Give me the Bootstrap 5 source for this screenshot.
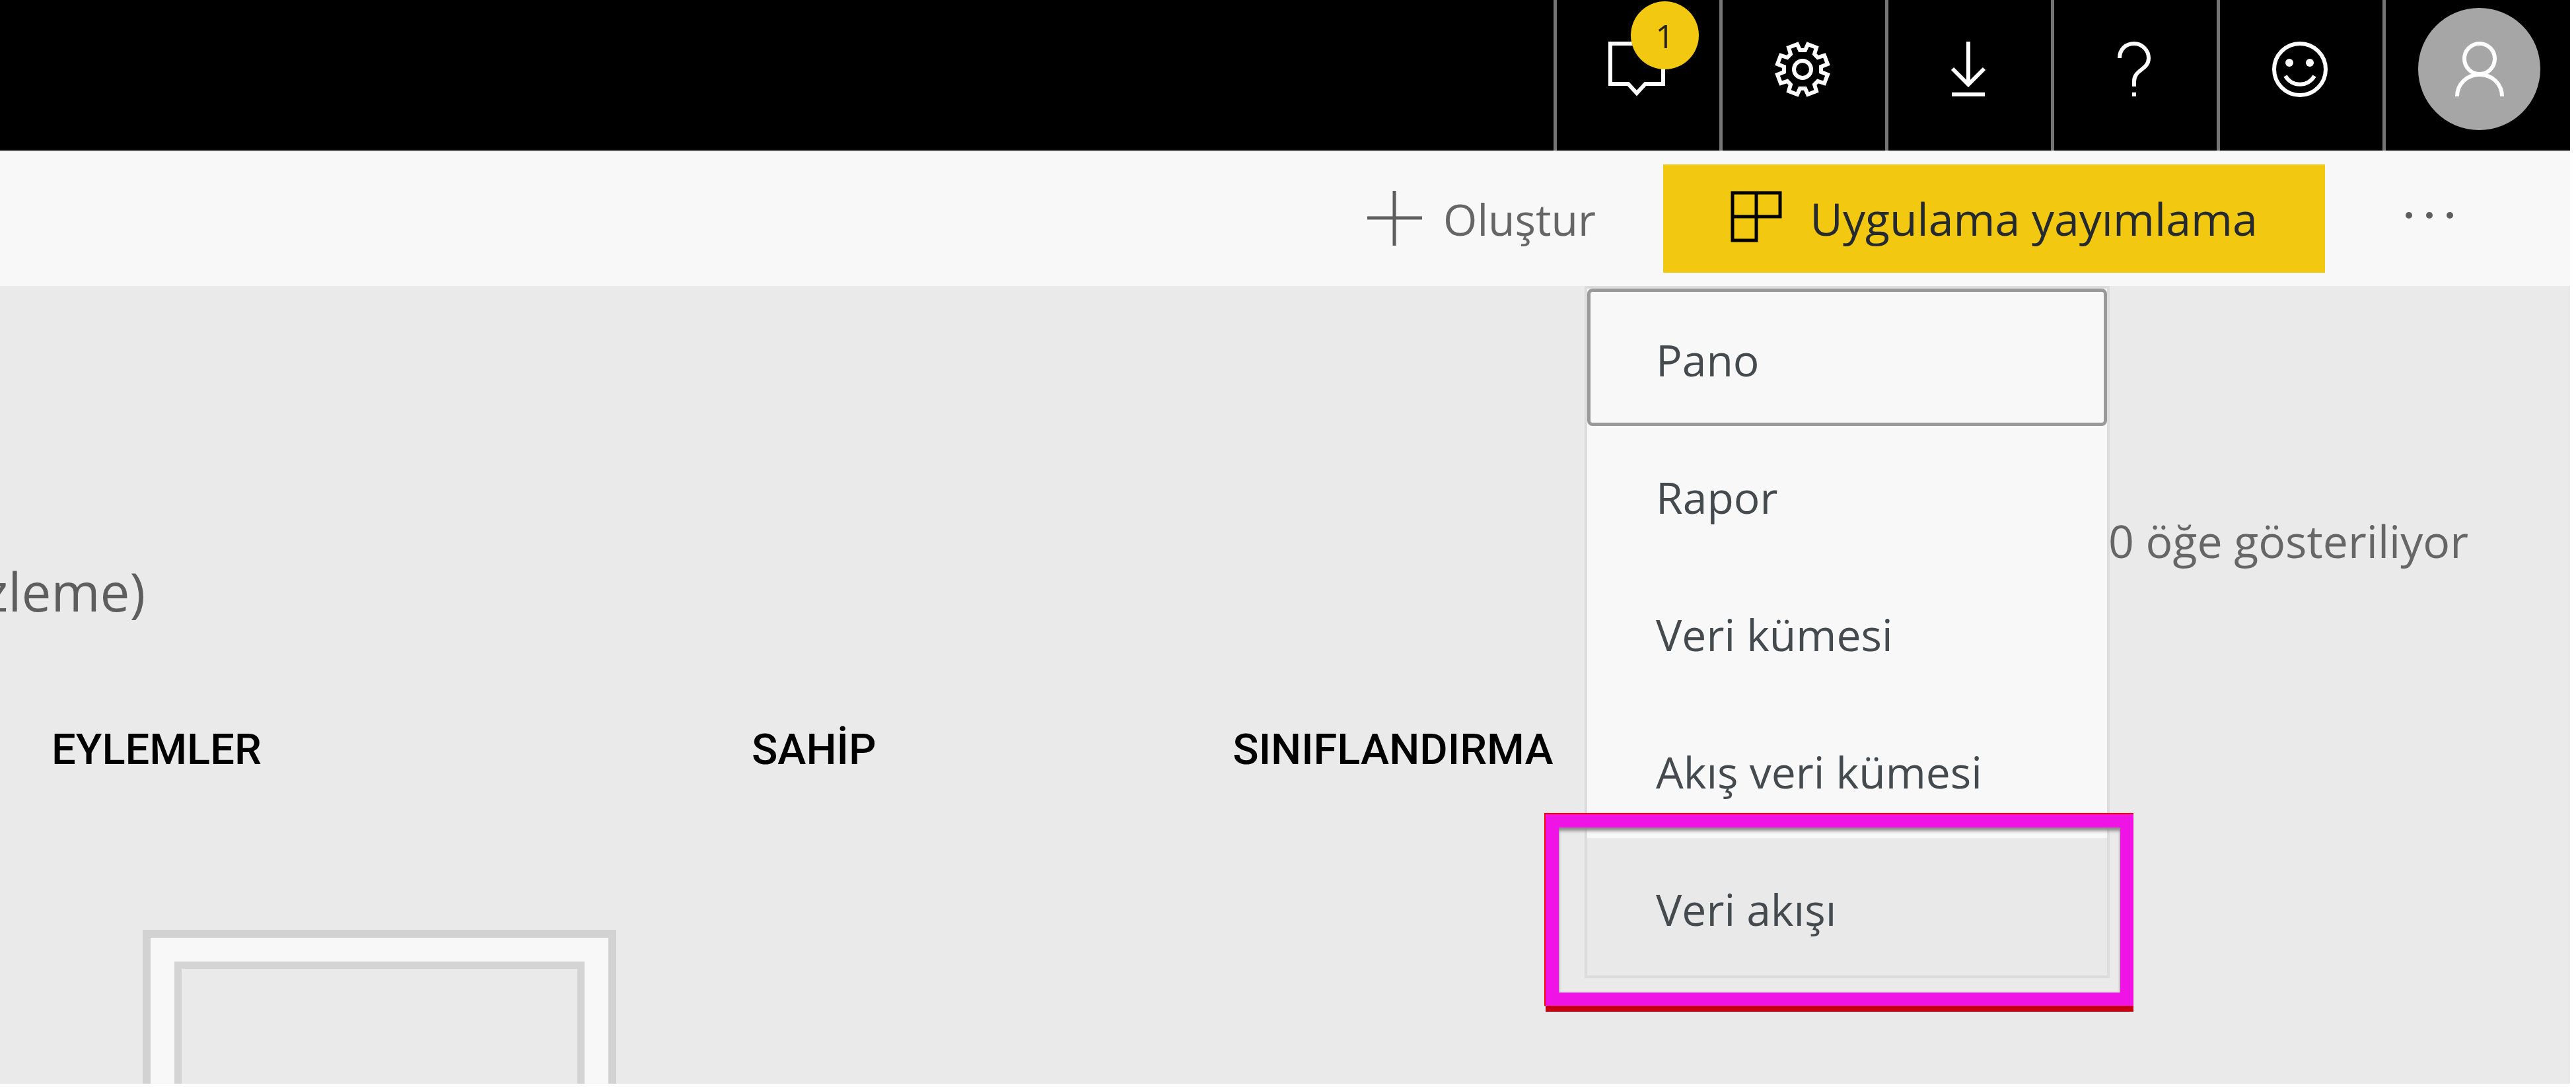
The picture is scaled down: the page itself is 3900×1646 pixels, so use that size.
<!DOCTYPE html>
<html lang="tr">
<head>
<meta charset="utf-8">
<meta name="viewport" content="width=device-width, initial-scale=1">
<title>Power BI</title>
<link href="https://cdn.jsdelivr.net/npm/bootstrap@5.3.0/dist/css/bootstrap.min.css" rel="stylesheet">
<style>
  body { font-family: "Open Sans", "Noto Sans", sans-serif; font-size: 68px; line-height: 96px; color: #666; background: #fff; }
  .app-shell { min-height: 100vh; padding: 0 9px 5px 0; }
  .btn { --bs-btn-border-width: 0; --bs-btn-border-radius: 0; font-size: inherit; line-height: inherit; }
  svg { display: block; fill: none; flex: none; }

  .top-strip { height: 228px; background: #000; }
  .top-cell { width: 251px; padding: 0 4px 19px 0; border-left: 5px solid #757575; color: #fff; }
  .top-cell svg { stroke: #fff; stroke-width: 6; }
  .user-cell { width: 284px; padding: 0 0 19px 4px; }
  .user-disc { width: 185px; height: 185px; background: #a6a6a6; }
  .count-dot { top: 2px; left: 112px; width: 103px; height: 103px; background: #f2c811; color: #252423; font-size: 50px; }

  .command-bar { height: 205px; padding-right: 176px; background: #f8f8f8; }
  .create-btn { --bs-btn-color: #666; --bs-btn-padding-x: 0; --bs-btn-padding-y: 0; gap: 32px; margin-right: 102px; font-size: 66px; }
  .publish-btn { --bs-btn-color: #252a30; --bs-btn-bg: #f2c811; --bs-btn-hover-bg: #e5bd10; --bs-btn-padding-y: 34px; width: 1002px; gap: 42px; margin-right: 121px; }

  .create-menu { top: 100%; right: 697px; width: 795px; background: #f8f8f8; border: 4px solid #dcdcdc; font-size: 66px; }
  .menu-entry { height: 208px; padding: 6px 104px 0; color: #444a4d; text-decoration: none; border: 0 solid #999; }
  .menu-entry.is-focused { border-width: 5px; border-radius: 8px; padding: 6px 99px 0; }
  .menu-entry.is-hovered { background: #e9e9e9; }
  .callout-frame { left: -63px; right: -40px; bottom: -46px; height: 290px; border: 20px solid #ef13e6;
    box-shadow: -1px -1px 0 1px #f00, 0 9px 0 0 #c40010, inset 0 6px 5px -1px #8a8a8a, inset 0 0 3px #aaa; pointer-events: none; }

  .content-area { background: #eaeaea; overflow: hidden; }
  .status-row { padding: 338px 154px 0 0; }
  .tab-row { height: 112px; font-size: 80px; line-height: 112px; margin-top: -28px; }
  .clipped-tab { width: 220px; color: #5e5e5e; text-decoration: none; }
  .list-head { margin: 136px 0 0 78px; width: calc(100% - 78px); table-layout: fixed; color: #000; font-family: Roboto, sans-serif; font-size: 65px; }
  .list-head th { font-weight: 500; padding: 0; }
  .col-actions { width: 27.8%; }
  .col-owner { width: 19.1%; }
  .empty-outer { width: 717px; margin: 225px 0 0 216px; padding: 36px 36px 0; background: #f8f8f8; border: 12px solid #d2d2d2; border-bottom: 0; }
  .empty-inner { border: 11px solid #d4d4d4; border-bottom: 0; background: #eaeaea; }
</style>
</head>
<body>
<div class="app-shell d-flex flex-column">
  <header class="top-strip d-flex justify-content-end">
    <button class="btn top-cell position-relative d-flex align-items-center justify-content-center" aria-label="Bildirimler">
      <svg width="86" height="84" viewBox="0 0 86 84"><path d="M3 3H83V64H56L43 78L30 64H3Z"/></svg>
      <span class="count-dot position-absolute rounded-circle d-flex align-items-center justify-content-center">1</span>
    </button>
    <button class="btn top-cell d-flex align-items-center justify-content-center" aria-label="Ayarlar">
      <svg width="84" height="84" viewBox="-42 -42 84 84"><circle r="13"/><path d="M-8 -38L-4 -29H4L8 -38L21 -33L18 -23L23 -18L33 -21L38 -8L28 -4V4L38 8L33 21L23 18L18 23L21 33L8 38L4 29H-4L-8 38L-21 33L-18 23L-23 18L-33 21L-38 8L-28 4V-4L-38 -8L-33 -21L-23 -18L-18 -23L-21 -33Z"/></svg>
    </button>
    <button class="btn top-cell d-flex align-items-center justify-content-center" aria-label="İndir">
      <svg width="54" height="84" viewBox="0 0 54 84"><path d="M27 0V66M3 41L27 65L51 41M2 80H52"/></svg>
    </button>
    <button class="btn top-cell d-flex align-items-center justify-content-center" aria-label="Yardım">
      <svg width="52" height="84" viewBox="0 0 52 84"><path d="M4 25C4 11 14 3 26 3C38 3 48 13 48 25C48 43 26 42 26 60V68M26 77V83"/></svg>
    </button>
    <button class="btn top-cell d-flex align-items-center justify-content-center" aria-label="Geri bildirim">
      <svg width="86" height="84" viewBox="-43 -42 86 84"><circle r="39"/><path d="M-22 10C-12 27 12 27 22 10"/><g fill="#fff" stroke="none"><circle cx="-16" cy="-10" r="6"/><circle cx="15" cy="-10" r="6"/></g></svg>
    </button>
    <button class="btn top-cell user-cell d-flex align-items-center justify-content-center" aria-label="Hesap">
      <span class="user-disc rounded-circle d-flex align-items-center justify-content-center">
        <svg width="76" height="84" viewBox="0 0 76 84"><circle cx="38" cy="26" r="23"/><path d="M4 83C4 64 19 50 38 50S72 64 72 83"/></svg>
      </span>
    </button>
  </header>

  <nav class="command-bar position-relative d-flex align-items-center justify-content-end">
    <button class="btn create-btn d-flex align-items-center" aria-expanded="true">
      <svg width="83" height="83" viewBox="0 0 83 83" stroke="#5e5e5e" stroke-width="5"><path d="M0 41H83M41 0V83"/></svg>
      Oluştur
    </button>
    <button class="btn publish-btn d-flex align-items-center justify-content-center">
      <svg width="78" height="84" viewBox="0 0 78 84" stroke="#000" stroke-width="5"><path d="M3 3H75V39H3ZM3 39V75H39V3"/></svg>
      Uygulama yayımlama
    </button>
    <button class="btn p-0" aria-label="Diğer seçenekler">
      <svg width="74" height="20" viewBox="0 0 74 20"><g fill="#5e5e5e"><circle cx="6" cy="5" r="5"/><circle cx="37" cy="5" r="5"/><circle cx="68" cy="5" r="5"/></g></svg>
    </button>

    <div class="create-menu position-absolute z-3">
      <a href="#" class="menu-entry is-focused d-flex align-items-center">Pano</a>
      <a href="#" class="menu-entry d-flex align-items-center">Rapor</a>
      <a href="#" class="menu-entry d-flex align-items-center">Veri kümesi</a>
      <a href="#" class="menu-entry d-flex align-items-center">Akış veri kümesi</a>
      <a href="#" class="menu-entry is-hovered d-flex align-items-center">Veri akışı</a>
      <div class="callout-frame position-absolute"></div>
    </div>
  </nav>

  <main class="content-area flex-grow-1 d-flex flex-column">
    <div class="status-row text-end">0 öğe gösteriliyor</div>
    <div class="tab-row d-flex"><a href="#" class="clipped-tab d-flex justify-content-end">zleme)</a></div>
    <table class="list-head">
      <thead>
        <tr><th class="col-actions">EYLEMLER</th><th class="col-owner">SAHİP</th><th>SINIFLANDIRMA</th></tr>
      </thead>
    </table>
    <div class="empty-outer flex-grow-1 d-flex"><div class="empty-inner flex-grow-1"></div></div>
  </main>
</div>
<script src="https://cdn.jsdelivr.net/npm/bootstrap@5.3.0/dist/js/bootstrap.bundle.min.js"></script>
</body>
</html>
